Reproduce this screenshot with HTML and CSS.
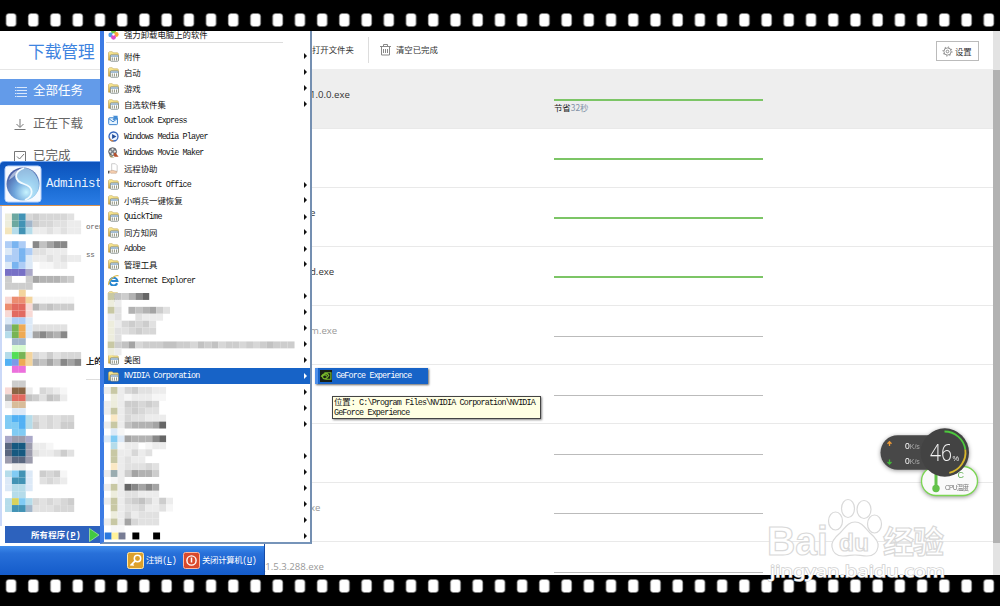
FILE: index.html
```
<!DOCTYPE html>
<html lang="zh-CN">
<head>
    <meta charset="UTF-8">
    <title>下载管理</title>
    <link rel="stylesheet" href="styles.css">
</head>
<body>
    <svg width="0" height="0" class="defs">
        <defs>
            <linearGradient id="yellow" x2="0" y2="1"><stop stop-color="#fff3a0"/><stop offset="1" stop-color="#d5a83a"/></linearGradient>
            <radialGradient id="ball" cx=".6" cy=".75" r=".8"><stop stop-color="#c8f4ff"/><stop offset=".45" stop-color="#6fa6dc"/><stop offset="1" stop-color="#45549c"/></radialGradient>
            <symbol id="folder" viewBox="0 0 12 12">
                <path d="M.5 10V1.8l1-1h3.2l1 1.2h4.8l.8 1V10z" fill="url(#yellow)" stroke="#b99a45" stroke-width=".6"/>
                <rect x="2.6" y="4.2" width="8.8" height="7" rx="1" fill="#fff" stroke="#5d6b68" stroke-width=".7"/>
                <path d="M3 5h8v1.1H3z" fill="#6190bc"/>
                <path d="M4.7 7v3.4M7 7v3.4M9.3 7v3.4" stroke="#8a8d78" stroke-width="1"/>
            </symbol>
        </defs>
    </svg>

    <svg class="film top"><defs><pattern id="holes" width="22.22" height="31" patternUnits="userSpaceOnUse"><rect x="6" y="13.5" width="10.2" height="13" rx="3" fill="#fff" stroke="#777" stroke-width=".6"/></pattern></defs><rect width="1000" height="31" fill="url(#holes)"/></svg>

    <div class="app">
        <aside class="sidebar">
            <h1>下载管理</h1>
            <div class="nav active">
                <svg width="13" height="12"><path d="M1 1.5h1.500M3 1.5H13M1 4.5h1.500M3 4.5H13M1 7.5h1.500M3 7.5H13M1 10.5h1.500M3 10.5H13" stroke="#d9e8fc"/></svg><span>全部任务</span>
            </div>
            <div class="nav">
                <svg width="13" height="12"><path d="M6 0v8M2.5 5L6 8.5 9.500 5M.5 10.500h11" fill="none" stroke="#777"/></svg><span>正在下载</span>
            </div>
            <div class="nav">
                <svg width="13" height="12"><path d="M.5.5h11v11H.5zM3 5.500l2.500 2.500L10 3" fill="none" stroke="#777"/></svg><span>已完成</span>
            </div>
        </aside>
        <main>
            <div class="toolbar">
                <span class="open">打开文件夹</span>
                <svg width="11" height="12"><path d="M0 2.500h11M1.500 2.500v8.500h8V2.500M3.500 2V.5h4V2M3.500 5v4M5.500 5v4M7.500 5v4" fill="none" stroke="#888"/></svg>
                <span class="clear">清空已完成</span>
                <button class="settings"><svg width="11" height="11" viewBox="0 0 11 11"><circle cx="5.500" cy="5.500" r="3.600" fill="none" stroke="#777" stroke-width=".8"/><circle cx="5.500" cy="5.500" r="4.500" fill="none" stroke="#777" stroke-dasharray="1.200 2.330"/><circle cx="5.500" cy="5.500" r="1.300" fill="none" stroke="#777" stroke-width=".8"/></svg>设置</button>
            </div>
            <div class="list">
                <div class="task selected"><span class="name">1.0.0.exe</span><div class="bar done"></div><p><b>节省</b>32秒</p></div>
                <div class="task"><div class="bar done"></div></div>
                <div class="task"><span class="name">e</span><div class="bar done"></div></div>
                <div class="task"><span class="name">d.exe</span><div class="bar done"></div></div>
                <div class="task pending"><span class="name">m.exe</span><div class="bar"></div></div>
                <div class="task"><div class="bar"></div></div>
                <div class="task"><div class="bar"></div></div>
                <div class="task pending"><span class="name">xe</span><div class="bar"></div></div>
                <div class="task pending"><span class="name long">_1.5.3.288.exe</span><div class="bar"></div></div>
            </div>
        </main>
        <div class="scrollbar"><div class="thumb"></div></div>
    </div>

    <div class="start">
        <div class="user">
            <svg width="38" height="38" viewBox="0 0 38 38"><rect x="1" y="1" width="36" height="36" rx="3" fill="#f7faff" stroke="#bcd3fa"/><circle cx="19" cy="19" r="16.500" fill="url(#ball)"/><path d="M20 2.800C9 7 10 16 20 19s10 12 1 16.300C34 33 39 20 31 9c-3-4-7-6-11-6.200z" fill="#b9e8fa" opacity=".65"/><path d="M20 3C9 7 10 16 20 19s10 12 1 16" fill="none" stroke="#f2fbff" stroke-width="1.800"/><path d="M5 15c2-7 7-10 12-11-5 5-7 8-12 11z" fill="#fff" opacity=".5"/></svg>
            <span>Administ</span>
        </div>
        <div class="recent">
            <span class="hint store">orer</span>
            <span class="hint express">ss</span>
            <span class="hint desktop">上的</span>
        </div>
        <div class="all"><span>所有程序(<u>P</u>)</span><svg width="11" height="14"><path d="M.5.5L10 7 .5 13.500z" fill="#42c941" stroke="#b1efa0" stroke-width=".7"/></svg></div>
        <div class="footer">
            <svg width="17" height="17"><rect x=".5" y=".5" width="16" height="16" rx="2" fill="#dca02c" stroke="#ffe7aa"/><circle cx="10.500" cy="6.500" r="3.200" fill="none" stroke="#fff" stroke-width="1.500"/><path d="M8.200 8.800L3.500 13.500M5 12l1.600 1.600" stroke="#fff" stroke-width="1.700"/></svg>
            <span class="logoff">注销(<u>L</u>)</span>
            <svg width="17" height="17"><rect x=".5" y=".5" width="16" height="16" rx="2" fill="#d9492d" stroke="#ffb7a0"/><circle cx="8.500" cy="8.500" r="4.600" fill="none" stroke="#fff" stroke-width="1.400"/><path d="M8.500 5.500v5" stroke="#fff" stroke-width="1.500"/></svg>
            <span>关闭计算机(<u>U</u>)</span>
        </div>
    </div>

    <div class="menu">
        <div class="item first"><svg class="icon" viewBox="0 0 12 12"><circle cx="6" cy="3" r="2.600" fill="#69c83c"/><circle cx="3" cy="6.500" r="2.600" fill="#4d9ded"/><circle cx="9" cy="6" r="2.600" fill="#f9a43b"/><circle cx="6" cy="9" r="2.600" fill="#dc4bc9"/><circle cx="6" cy="6" r="1.300" fill="#fff"/></svg>强力卸载电脑上的软件</div>
        <div class="item sub"><svg class="icon"><use href="#folder"/></svg>附件</div>
        <div class="item sub"><svg class="icon"><use href="#folder"/></svg>启动</div>
        <div class="item sub"><svg class="icon"><use href="#folder"/></svg>游戏</div>
        <div class="item sub"><svg class="icon"><use href="#folder"/></svg>自选软件集</div>
        <div class="item en"><svg class="icon" viewBox="0 0 12 12"><rect x=".8" y="3" width="9.500" height="7.500" rx="1" fill="#e7f4ff" stroke="#2e79c7"/><path d="M1 4l4.500 3.500L10 4" fill="none" stroke="#2e79c7"/><path d="M5 .8h5.500v4.500L9 4 6.500 6 5 4.500 7 2.500z" fill="#438cd5"/></svg>Outlook Express</div>
        <div class="item en"><svg class="icon" viewBox="0 0 12 12"><circle cx="6" cy="6" r="4.900" fill="#edf4ff" stroke="#3465bc" stroke-width="1.400"/><path d="M1.500 8.500a5 5 0 0 0 4.500 2.500" fill="none" stroke="#e48735" stroke-width="1.400"/><path d="M4.500 3.200L9.200 6 4.500 8.800z" fill="#214c99"/></svg>Windows Media Player</div>
        <div class="item en"><svg class="icon" viewBox="0 0 12 12"><circle cx="5" cy="5" r="4.300" fill="#777d85" stroke="#404348" stroke-width=".7"/><g fill="#e5e5e0"><circle cx="5" cy="2.500" r="1.200"/><circle cx="2.500" cy="5" r="1.200"/><circle cx="7.500" cy="5" r="1.200"/><circle cx="5" cy="7.500" r="1.200"/></g><path d="M6 7l2-1 3.500 4.500H7z" fill="#b54f2b"/><path d="M1 9l2 2.500h4L3 9z" fill="#9c8e5c"/></svg>Windows Movie Maker</div>
        <div class="item"><svg class="icon" viewBox="0 0 12 12"><path d="M4 .8h4l2 2V9H4z" fill="#fff" stroke="#bbb" stroke-width=".8"/><path d="M1 9l4-1 5 1.500-1 1.700H3z" fill="#f6cfb0" stroke="#b79378" stroke-width=".5"/><path d="M0 8.500h1.500v3H0z" fill="#555"/></svg>远程协助</div>
        <div class="item sub en"><svg class="icon"><use href="#folder"/></svg>Microsoft Office</div>
        <div class="item sub"><svg class="icon"><use href="#folder"/></svg>小哨兵一键恢复</div>
        <div class="item sub en"><svg class="icon"><use href="#folder"/></svg>QuickTime</div>
        <div class="item sub"><svg class="icon"><use href="#folder"/></svg>同方知网</div>
        <div class="item sub en"><svg class="icon"><use href="#folder"/></svg>Adobe</div>
        <div class="item sub"><svg class="icon"><use href="#folder"/></svg>管理工具</div>
        <div class="item en"><svg class="icon" viewBox="0 0 12 12"><path d="M10 9a4.200 4.200 0 1 1 .3-2.500H3.500" fill="none" stroke="#2685cf" stroke-width="2.200"/><path d="M1 11C-1 7 8-1 11.500 1" fill="none" stroke="#dfba48" stroke-width="1.200"/></svg>Internet Explorer</div>
        <div class="item sub"><svg class="icon"><use href="#folder"/></svg></div>
        <div class="item sub"></div>
        <div class="item sub"></div>
        <div class="item sub"></div>
        <div class="item sub"><svg class="icon"><use href="#folder"/></svg>美图</div>
        <div class="item sub en hover"><svg class="icon"><use href="#folder"/></svg>NVIDIA Corporation</div>
        <div class="item sub"></div>
        <div class="item sub"></div>
        <div class="item sub"></div>
        <div class="item"></div>
        <div class="item sub"></div>
        <div class="item sub"></div>
        <div class="item sub"></div>
        <div class="item sub"></div>
        <div class="item sub"></div>
        <div class="item sub"></div>
    </div>

    <svg id="mosaic" class="mosaic" width="320" height="606"></svg>

    <div class="flyout"><svg width="12" height="12" viewBox="0 0 11 11"><path d="M0 0h11v11H0z" fill="#182016"/><path d="M1 6c2-3 5-4 7-1-2 4-5 4-6 1 2-2 4-2 4 0M4 2.500h6v6H5" fill="none" stroke="#78b82a" stroke-width="1.100"/></svg>GeForce Experience</div>
    <div class="tooltip"><span>位置</span>: C:\Program Files\NVIDIA Corporation\NVIDIA<br>GeForce Experience</div>

    <svg class="film bottom"><defs><pattern id="holes2" width="22.22" height="31" patternUnits="userSpaceOnUse"><rect x="6" y="4.500" width="10.200" height="13" rx="3" fill="#fff" stroke="#777" stroke-width=".6"/></pattern></defs><rect width="1000" height="31" fill="url(#holes2)"/></svg>

    <svg class="watermark" width="200" height="95" viewBox="760 490 200 95">
        <g class="outline">
            <ellipse cx="835.500" cy="521" rx="7" ry="9"/><ellipse cx="848" cy="508.500" rx="6.500" ry="9"/><ellipse cx="864" cy="509.500" rx="7" ry="9"/><ellipse cx="874.500" cy="524" rx="7" ry="9"/>
            <text x="767" y="555" class="big" textLength="61" lengthAdjust="spacingAndGlyphs">Bai</text>
            <path d="M855 522c-7 0-10 6-15 11-6 5-9 9-8 14 1 6 5 9 11 9 5 0 8-1 12-1s7 1 12 1c6 0 10-3 11-9 1-5-2-9-8-14-5-5-8-11-15-11z"/>
            <text x="839" y="551" class="du" textLength="30" lengthAdjust="spacingAndGlyphs">du</text>
            <text x="883" y="553" class="cn" textLength="61">经验</text>
        </g>
        <text x="770" y="577" class="url" textLength="175" lengthAdjust="spacingAndGlyphs">jingyan.baidu.com</text>
    </svg>

    <svg class="monitor" width="110" height="80" viewBox="875 423 110 80">
        <rect x="921.500" y="466.500" width="56" height="29" rx="14.500" fill="#fafafa" stroke="#7bd652" stroke-width="1.300"/>
        <path d="M936 470v18" stroke="#63c24a" stroke-width="3"/><circle cx="936" cy="488.500" r="3.700" fill="#63c24a"/>
        <text x="954" y="478" class="deg">°C</text><text x="945" y="490" class="cpu" textLength="24">CPU温度</text>
        <rect x="880.500" y="435.300" width="75" height="34.500" rx="17.200" fill="#484848"/>
        <circle cx="944.800" cy="452.500" r="24.200" fill="#434343"/>
        <path d="M944.500 431.500a21 21 0 0 1 20.800 18" fill="none" stroke="#4cc83c" stroke-width="1.800"/>
        <path d="M965.300 449.500a21 21 0 0 1-16 23.300" fill="none" stroke="#d8b72d" stroke-width="1.800"/>
        <path d="M889.500 446v-4M887.500 443.700l2-2 2 2" fill="none" stroke="#ee9a35" stroke-width="1.300"/>
        <path d="M889.500 459.500v4M887.500 462l2 2 2-2" fill="none" stroke="#42b938" stroke-width="1.300"/>
        <text x="905" y="449" class="speed"><tspan>0</tspan>K/s</text>
        <text x="905" y="463.500" class="speed"><tspan>0</tspan>K/s</text>
        <text x="930" y="461" class="load" textLength="22" lengthAdjust="spacingAndGlyphs">46</text><text x="952.500" y="461" class="percent">%</text>
    </svg>

    <script src="mosaic.js"></script>
</body>
</html>
```

FILE: styles.css
```
* {
    box-sizing: border-box;
}
body {
    margin: 0;
    width: 1000px;
    height: 606px;
    overflow: hidden;
    position: relative;
    background: #fff;
    color: #333;
    font-family: "Liberation Sans", "Noto Sans CJK SC", sans-serif;
    font-size: 8.4px;
}
.defs {
    position: absolute;
}
.film {
    display: block;
    width: 1000px;
    height: 31px;
    background: #000;
    position: relative;
}
.app {
    display: flex;
    height: 544px;
    overflow: hidden;
}

/* download manager */
.sidebar {
    width: 100px;
}
.sidebar h1 {
    margin: 0 0 9px;
    height: 39px;
    padding-left: 28px;
    border-bottom: 1px solid #e6e6e6;
    font: 16.7px/40px "Noto Sans CJK SC", sans-serif;
    color: #3e84df;
    white-space: nowrap;
}
.nav {
    display: flex;
    align-items: center;
    gap: 6px;
    height: 26px;
    margin-bottom: 6.5px;
    padding-left: 14px;
    font: 12.5px/16px "Noto Sans CJK SC", sans-serif;
    color: #666;
}
.nav span {
    margin-top: -4px;
}
.nav.active {
    background: #639be9;
    color: #fff;
}
main {
    width: 893px;
}
.toolbar {
    display: flex;
    align-items: center;
    height: 38px;
    padding-left: 212px;
    font-family: "Noto Sans CJK SC", sans-serif;
}
.toolbar svg {
    margin-right: 5px;
}
.toolbar .open {
    width: 57px;
    line-height: 25px;
    margin-right: 11px;
    padding-bottom: 1px;
    border-right: 1px solid #ddd;
}
.toolbar .clear {
    padding-bottom: 2px;
}
.toolbar .settings {
    display: flex;
    align-items: center;
    width: 43px;
    height: 20px;
    margin: 2px 14px 0 auto;
    padding: 0 0 0 5px;
    border: 1px solid #bbb;
    background: #fff;
    color: #333;
    font: 8.4px "Noto Sans CJK SC", sans-serif;
}
.toolbar .settings svg {
    margin-right: 2px;
}
.task {
    display: grid;
    grid-template-columns: 209px;
    grid-template-rows: 12px 8px;
    height: 59px;
    padding: 19px 0 0 454px;
    border-bottom: 1px solid #e9e9e9;
    position: relative;
}
.task.selected {
    height: 60px;
    padding-top: 20px;
    background: #eee;
}
.task .name {
    position: absolute;
    left: 210px;
    top: 18px;
    font: 9.6px/14px "Open Sans", sans-serif;
    color: #333;
}
.task.selected .name {
    top: 19px;
}
.task.pending .name {
    color: #999;
}
.task .name.long {
    left: 161px;
}
.bar {
    align-self: end;
    border-bottom: 1px solid #bbb;
}
.bar.done {
    border-bottom: 2px solid #7cc566;
}
.task p {
    margin: 0;
    font: 8.4px/12px "Noto Sans CJK SC", sans-serif;
    color: #8291a5;
}
.task p b {
    font-weight: normal;
    color: #222;
}
.scrollbar {
    width: 7px;
    padding-top: 39px;
    background: #e3e3e3;
}
.scrollbar .thumb {
    height: 473px;
    background: #b2b2b2;
}

/* start menu */
.start {
    position: absolute;
    left: 0;
    top: 161px;
    width: 265px;
    height: 414px;
    display: flex;
    flex-direction: column;
    background: #fff;
    border-radius: 4px 4px 0 0;
    border-right: 1px solid #164ba5;
    font-family: "Liberation Mono", "Noto Sans CJK SC", monospace;
}
.user {
    display: flex;
    align-items: center;
    flex: none;
    height: 45px;
    padding-left: 4px;
    gap: 4px;
    border-top: 1px solid #73a5ed;
    border-bottom: 1px solid #d89250;
    border-radius: 4px 4px 0 0;
    background: linear-gradient(#0c52bc, #1768d0 50%, #2b7de5);
    color: #e8f2ff;
    font-size: 12.5px;
    letter-spacing: -.5px;
}
.recent {
    height: 320px;
    position: relative;
    border-left: 2px solid #cbd9f8;
}
.hint {
    position: absolute;
    left: 84px;
    color: #666;
    font-size: 7.5px;
    letter-spacing: -.3px;
}
.store {
    top: 17px;
}
.express {
    top: 45px;
}
.desktop {
    top: 148px;
    height: 26px;
    border-bottom: 1px solid #ddd;
    font-size: 8.4px;
    letter-spacing: 0;
    font-weight: bold;
    color: #222;
}
.all {
    display: flex;
    align-items: center;
    gap: 6px;
    width: 96px;
    height: 17px;
    margin-left: 5px;
    padding-left: 26px;
    background: #2d62bd;
    color: #fff;
    font-weight: bold;
    white-space: nowrap;
}
.all span {
    width: 52px;
    letter-spacing: .2px;
}
.footer {
    display: flex;
    align-items: center;
    gap: 2px;
    height: 29px;
    margin-top: 3px;
    padding-left: 127px;
    background: linear-gradient(#3e8cec, #2870d9 25%, #145bca);
    color: #fff;
    white-space: nowrap;
}
.footer span {
    letter-spacing: -.3px;
    margin-top: -2px;
}
.footer .logoff {
    width: 35px;
}

/* all programs */
.menu {
    position: absolute;
    left: 100px;
    top: 31px;
    width: 212px;
    height: 513px;
    overflow: hidden;
    background: #fff;
    border: solid #3c7be4;
    border-width: 0 2px 2px 4px;
    border-right-color: #748fb1;
    border-bottom-color: #7694b9;
    color: #111;
    font-family: "Liberation Mono", "Noto Sans CJK SC", monospace;
}
.item {
    display: flex;
    align-items: center;
    gap: 5px;
    height: 15.97px;
    padding-left: 4px;
    white-space: nowrap;
}
.item.first {
    height: 15px;
    margin: -4px 25px 6.5px 0;
    box-shadow: 0 3px 0 -2px #ddd;
}
.item.en {
    padding-top: 1px;
    letter-spacing: -.84px;
}
.icon {
    width: 11px;
    height: 11px;
    flex: none;
}
.item.sub::after {
    content: "";
    margin: 0 3px 0 auto;
    border: solid transparent;
    border-width: 3px 0 3px 3px;
    border-left-color: currentColor;
}
.item.hover {
    background: #1763c7;
    color: #fff;
}
.mosaic {
    position: absolute;
    left: 0;
    top: 0;
}
.flyout {
    position: absolute;
    left: 315px;
    top: 368px;
    width: 113px;
    height: 16px;
    display: flex;
    align-items: center;
    gap: 4px;
    padding-left: 2px;
    border-left: 3px solid #4e8fe9;
    background: #1763c7;
    box-shadow: 1px 1px 2px #666;
    color: #fff;
    font: 8.4px "Liberation Mono", monospace;
    letter-spacing: -.84px;
}
.tooltip {
    position: absolute;
    left: 332px;
    top: 396px;
    width: 209px;
    height: 23px;
    padding: 1px;
    border: 1px solid #444;
    background: #ffffe3;
    box-shadow: 1px 1px 2px #888;
    color: #111;
    font: 8.4px/10px "Liberation Mono", "Noto Sans CJK SC", monospace;
    letter-spacing: -.84px;
    white-space: nowrap;
}
.tooltip span {
    letter-spacing: 0;
}

/* floating pieces */
.watermark {
    position: absolute;
    left: 760px;
    top: 490px;
    font-family: "Liberation Sans", "Noto Sans CJK SC", sans-serif;
}
.outline {
    fill: #fff;
    stroke: #d9d9d9;
    stroke-width: 1.2px;
    font-weight: bold;
}
.big {
    font-size: 41px;
}
.du {
    font-size: 23px;
}
.cn {
    font-size: 31px;
}
.url {
    font: 17px "Noto Sans", sans-serif;
    fill: #fff;
    stroke: #d0d0d0;
    stroke-width: 1.4px;
    paint-order: stroke;
}
.monitor {
    position: absolute;
    left: 875px;
    top: 423px;
    filter: drop-shadow(0 1px 2px rgba(0, 0, 0, .4));
    font-family: "Liberation Sans", "Noto Sans CJK SC", sans-serif;
}
.deg {
    font-size: 9px;
    fill: #63b154;
}
.cpu {
    font-size: 6.5px;
    fill: #777;
}
.speed {
    font-size: 7px;
    fill: #aaa;
}
.speed tspan {
    font-size: 8.5px;
    fill: #fff;
}
.load {
    font: 300 24px "Open Sans", sans-serif;
    fill: #f4f4f4;
}
.percent {
    font-size: 7.5px;
    fill: #eee;
}
```

FILE: mosaic.js
```
// blurred entries: [x, y, rows], one hex grey or palette letter per cell, "." is empty
const CELL = 6.92;
const palette = {
    A: '#6ca8a0', B: '#4293b5', C: '#b5dcea', D: '#f3e5bd', G: '#aecdf6', H: '#79b4f0',
    I: '#7770c6', J: '#aaa8c8', K: '#ec8c70', L: '#e26a60', M: '#f3d49d', N: '#a2b6cb',
    O: '#eeaa55', P: '#78b454', Q: '#52df55', R: '#52b1f4', S: '#7d9ae8', T: '#ec70dc',
    U: '#8a6545', V: '#d8bc99', W: '#80cbf4', X: '#9c9cad', Y: '#165980', Z: '#5b6880',
    g: '#c8c8a4', h: '#ededdd', i: '#fae8c4', j: '#dce9f7', k: '#d9d25d', m: '#9aacb0',
    p: '#f8d9d5', q: '#d7fbd0', y: '#fff29a', z: '#2b79df', n: '#777c94'
};
const greys = { 0: '#000', 4: '#666', 6: '#888', 8: '#a4a4a4', 9: '#b2b2b2', a: '#c2c2c2', b: '#cdcdcd', c: '#d7d7d7', d: '#e1e1e1', e: '#ececec', f: '#f6f6f6' };

const blocks = [
    [5, 213.5, [
        'hABcbccccd.', 'hABNbccddee', 'DCBCeededee',
        '...........', 'GHG.6a866..', 'jGHGddeee..', 'GGHjeededee', 'jHGj.ffee..',
    ]],
    [5, 269, [
        'IIIJ.......', 'b..b8999ab.', 'bbbb.......', '..M........', 'pKKMffffff.',
        'KLLp9babbb.', 'pLLp.......', 'jGGj.......', 'NPOjddddd..', 'CPOj86896..',
        '.NN........', '.qq........', 'CQPMcdbdccc', 'RSOM9a8a686', '.TT........'
    ]],
    [5, 380.5, [
        '.bb........', 'pUUe.cdef..', '9LLabdabe..', 'eVV........', '.jj........',
        'WRRCcdcdcc.', 'WWRCbdcdbb.', '.WW........', 'JXXJ.......', 'ZYYXeef....',
        'ZYYXdeedbd.', 'XZZX.......', '.ee........', 'CWBj.bcbf..', 'jBBj.dcde..',
        'jCCj.......', '.CC........', 'CkWCcdcdcb.', 'CBBNdddccc.'
    ]],
    [107.7, 293, [
        'gab964', 'he....', 'gd.9a98bd', 'ed..deee', 'hecbcbd', 'hddcbcc', 'hd',
        'gba8cbbbaabbcabacbbcbcbabbb', 'he'
    ]],
    [103.8, 387, [
        'egecbddee', '.hefeeeff', 'ehebbcbc', 'egecbcdd', '.iecddeee', 'egea99984', '.jf......',
        'jWj899964', '.CfeeEfee', '.geeced', '.gedee', '.iedddcd', 'emeb899b', '.fe......',
        'ege46868', '.heddeee', 'egecbacebe', '.geddceedf', '.heceddd', 'ege8cddd', '.ff......'
    ]],
    [104.7, 532.5, ['zyn.0..0']]
];

const svg = document.getElementById('mosaic');
blocks.forEach(([x, y, rows]) => {
    rows.forEach((row, r) => {
        [...row].forEach((cell, c) => {
            const fill = palette[cell] || greys[cell];
            if (!fill) return;
            const rect = document.createElementNS('http://www.w3.org/2000/svg', 'rect');
            rect.setAttribute('x', x + c * CELL);
            rect.setAttribute('y', y + r * CELL);
            rect.setAttribute('width', CELL);
            rect.setAttribute('height', CELL);
            rect.setAttribute('fill', fill);
            svg.append(rect);
        });
    });
});
```
